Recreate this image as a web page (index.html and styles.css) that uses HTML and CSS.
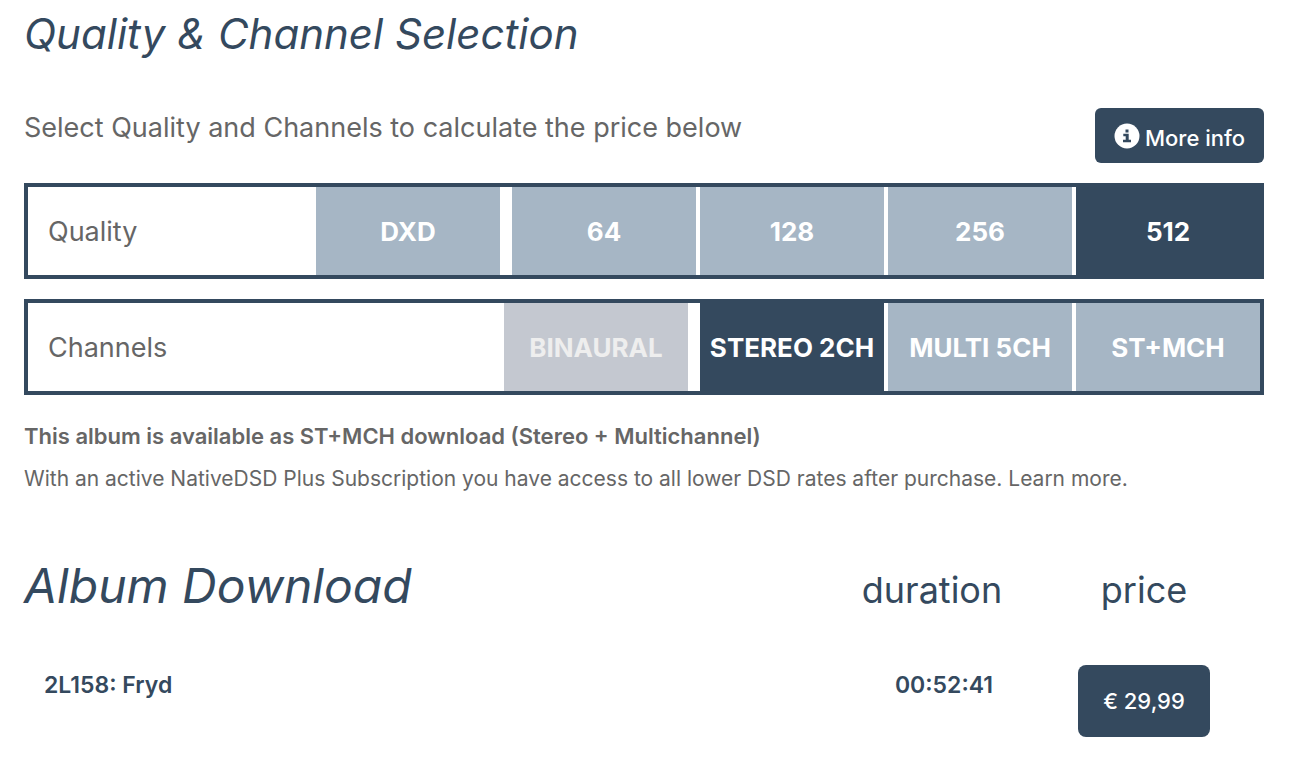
FILE: index.html
```
<!DOCTYPE html>
<html lang="en">
<head>
    <meta charset="UTF-8">
    <meta name="viewport" content="width=device-width, initial-scale=1.0">
    <title>Quality &amp; Channel Selection</title>
    <link rel="stylesheet" href="styles.css">
</head>
<body>

    <main class="page">
        <h1>Quality &amp; Channel Selection</h1>

        <div class="intro">
            <p>Select Quality and Channels to calculate the price below</p>
            <button type="button" class="info-button">
                <svg viewBox="0 0 26 26" aria-hidden="true">
                    <circle cx="13" cy="13" r="12.500" fill="#fff"/>
                    <path fill="#34495e" d="M11.500 6.500h3v3h-3zM9.300 10.800h5.400v6h2.300v2.400H9V16.800h2.700v-3.600H9.300z"/>
                </svg>
                <span>More info</span>
            </button>
        </div>

        <!-- Quality -->
        <div class="selector" role="radiogroup" aria-labelledby="quality-title">
            <span class="selector-title" id="quality-title">Quality</span>
            <label class="option separate"><input type="radio" name="quality" value="dxd"><span>DXD</span></label>
            <label class="option"><input type="radio" name="quality" value="64"><span>64</span></label>
            <label class="option"><input type="radio" name="quality" value="128"><span>128</span></label>
            <label class="option"><input type="radio" name="quality" value="256"><span>256</span></label>
            <label class="option"><input type="radio" name="quality" value="512" checked><span>512</span></label>
        </div>

        <!-- Channels -->
        <div class="selector" role="radiogroup" aria-labelledby="channels-title">
            <span class="selector-title" id="channels-title">Channels</span>
            <label class="option separate"><input type="radio" name="channels" value="binaural" disabled><span>BINAURAL</span></label>
            <label class="option"><input type="radio" name="channels" value="stereo" checked><span>STEREO 2CH</span></label>
            <label class="option"><input type="radio" name="channels" value="multi"><span>MULTI 5CH</span></label>
            <label class="option"><input type="radio" name="channels" value="both"><span>ST+MCH</span></label>
        </div>

        <div class="notes">
            <p><strong>This album is available as ST+MCH download (Stereo + Multichannel)</strong></p>
            <p>With an active NativeDSD Plus Subscription you have access to all lower DSD rates after purchase. <a href="#">Learn more.</a></p>
        </div>

        <table class="downloads">
            <thead>
                <tr>
                    <th class="album" scope="col">Album Download</th>
                    <th class="duration" scope="col">duration</th>
                    <th class="price" scope="col">price</th>
                </tr>
            </thead>
            <tbody>
                <tr>
                    <td class="album">2L158: Fryd</td>
                    <td class="duration">00:52:41</td>
                    <td class="price"><button type="button" class="price-button">€ 29,99</button></td>
                </tr>
            </tbody>
        </table>
    </main>

</body>
</html>
```
FILE: styles.css
```
* {
    box-sizing: border-box;
}

body {
    margin: 0;
    background: #fff;
    color: #666;
    font-family: Inter, Roboto, sans-serif;
    font-size: 27px;
}

p {
    margin: 0;
}

button {
    border: none;
    background-color: #34495e;
    color: #fff;
    font-family: inherit;
    font-size: 22px;
    font-weight: 500;
    cursor: pointer;
}

.page {
    padding: 4px 27px 24px 24px;
}

h1 {
    margin: 0 0 44px;
    color: #34495e;
    font-size: 42px;
    font-style: italic;
    font-weight: 400;
    line-height: 60px;
}

.intro {
    display: flex;
    justify-content: space-between;
    align-items: flex-start;
    margin-bottom: 20px;
    line-height: 40px;
}

.info-button {
    display: flex;
    justify-content: center;
    align-items: center;
    gap: 5px;
    width: 169px;
    height: 55px;
    padding: 4px 0 0;
    border-radius: 6px;
}

.info-button svg {
    width: 26px;
    height: 26px;
    margin-bottom: 4px;
}

/* Option bars */
.selector {
    display: flex;
    gap: 4px;
    height: 96px;
    margin-bottom: 20px;
    border: 4px solid #34495e;
}

.selector-title {
    flex: 1;
    align-self: center;
    padding-left: 20px;
}

.option {
    position: relative;
    display: flex;
    width: 184px;
    cursor: pointer;
}

.option.separate {
    margin-right: 8px;
}

.option input {
    position: absolute;
    opacity: 0;
}

.option span {
    display: flex;
    flex: 1;
    justify-content: center;
    align-items: center;
    background-color: #a6b6c5;
    color: #fff;
    font-size: 26px;
    font-weight: 700;
    white-space: nowrap;
}

.option input:checked + span {
    background-color: #34495e;
}

.option input:disabled + span {
    background-color: #c4c8d0;
    color: #eee;
}

.notes {
    font-size: 21px;
    line-height: 42px;
}

.notes strong {
    font-size: 22px;
    font-weight: 600;
}

.notes a {
    color: inherit;
    text-decoration: none;
}

/* Album table */
.downloads {
    width: 100%;
    margin-top: 56px;
    border-collapse: collapse;
    table-layout: fixed;
    color: #34495e;
}

.downloads th {
    height: 92px;
    padding: 0;
    font-size: 36px;
    font-weight: 400;
    vertical-align: baseline;
}

.downloads th.album {
    font-size: 48px;
    font-style: italic;
    text-align: left;
}

.downloads td {
    padding: 17px 0 0;
    font-size: 23px;
    font-weight: 600;
    line-height: 40px;
    vertical-align: top;
}

.downloads td.album {
    padding-left: 20px;
}

.downloads .duration {
    width: 200px;
    padding-left: 16px;
    text-align: center;
}

.downloads td.duration {
    padding-left: 40px;
}

.downloads .price {
    width: 240px;
    text-align: center;
}

.price-button {
    width: 132px;
    height: 72px;
    border-radius: 8px;
}
```
